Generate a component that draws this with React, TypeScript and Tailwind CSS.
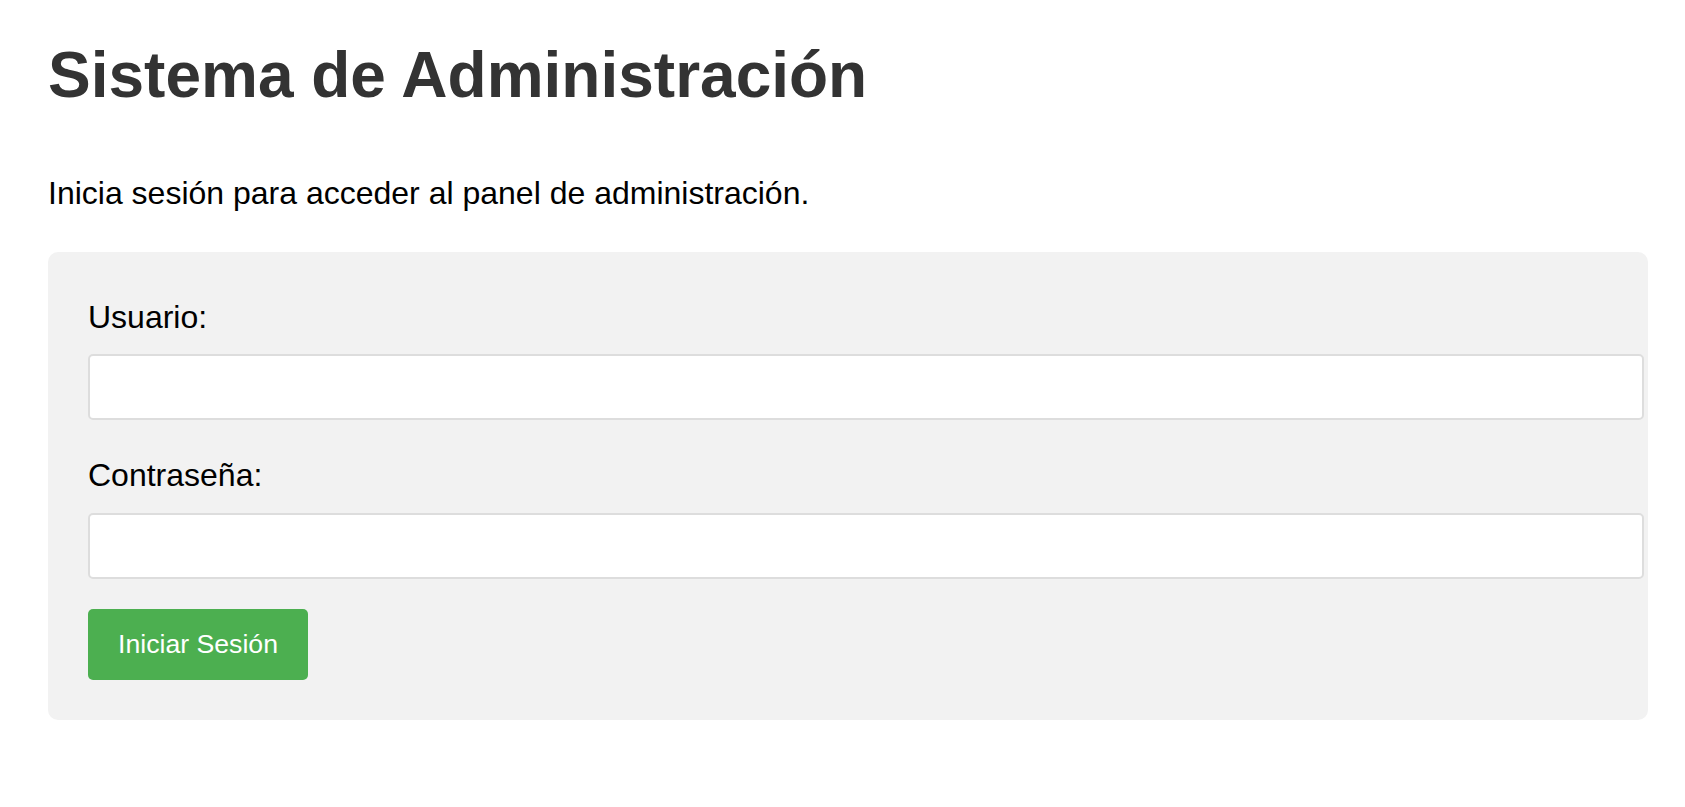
export default function App() {
    return (
        <main className="min-h-screen bg-white pl-[48px] pr-[37px] pt-[24px] font-['Liberation_Sans',Arial,sans-serif] text-black">

            <h1 className="text-[64px] leading-[1.6] font-bold text-[#333] mb-[42px]">Sistema de Administración</h1>

            <p className="text-[32px] leading-[1.6] mb-[32px]">Inicia sesión para acceder al panel de administración.</p>

            <form className="bg-[#f2f2f2] rounded-[10px] p-[40px]" onSubmit={(e) => e.preventDefault()}>
                <label htmlFor="usuario" className="block text-[32px] leading-[1.6] mb-[11px]">Usuario:</label>
                <input
                    id="usuario"
                    type="text"
                    className="block w-[calc(100%+36px)] h-[66.67px] px-[16px] mb-[30px] bg-white border-2 border-[#ddd] rounded-[5px] text-[26.67px] outline-none"
                />

                <label htmlFor="clave" className="block text-[32px] leading-[1.6] mb-[11px]">Contraseña:</label>
                <input
                    id="clave"
                    type="password"
                    className="block w-[calc(100%+36px)] h-[66.67px] px-[16px] mb-[30px] bg-white border-2 border-[#ddd] rounded-[5px] text-[26.67px] outline-none"
                />

                <button type="submit" className="block bg-[#4caf50] text-white text-[26.67px] leading-[normal] px-[30px] py-[20px] rounded-[5px] cursor-pointer">
                    Iniciar Sesión
                </button>
            </form>

        </main>
    )
}
